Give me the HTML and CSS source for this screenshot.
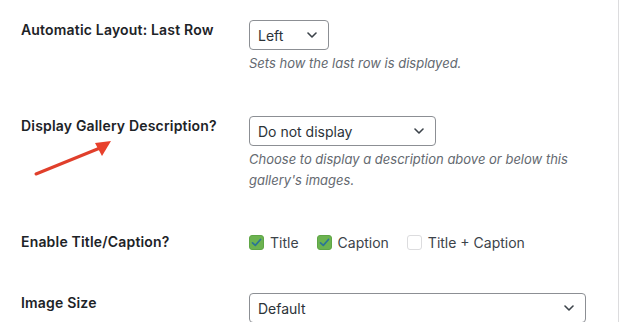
FILE: index.html
```html
<!DOCTYPE html>
<html lang="en">
<head>
  <meta charset="UTF-8">
  <title>Gallery Settings</title>
  <link rel="stylesheet" href="styles.css">
</head>
<body>
  <div class="panel">
    <!-- Settings rows -->
    <div class="form-table">
      <div class="row">
        <div class="label">Automatic Layout: Last Row</div>
        <div class="field">
          <div class="select select-small">
            <span>Left</span>
            <svg class="chevron" width="10" height="6" viewBox="0 0 10 6"><path d="M1 1l4 4 4-4" fill="none" stroke="#3c434a" stroke-width="1.6" stroke-linecap="round" stroke-linejoin="round"/></svg>
          </div>
          <p class="description">Sets how the last row is displayed.</p>
        </div>
      </div>

      <div class="row">
        <div class="label">Display Gallery Description?</div>
        <div class="field">
          <div class="select select-medium">
            <span>Do not display</span>
            <svg class="chevron" width="10" height="6" viewBox="0 0 10 6"><path d="M1 1l4 4 4-4" fill="none" stroke="#3c434a" stroke-width="1.6" stroke-linecap="round" stroke-linejoin="round"/></svg>
          </div>
          <p class="description">Choose to display a description above or below this gallery's images.</p>
        </div>
      </div>

      <div class="row row-checks">
        <div class="label">Enable Title/Caption?</div>
        <div class="field checks">
          <label class="check-item">
            <span class="check checked">
              <svg width="11" height="9" viewBox="0 0 11 9"><path d="M1.5 4.8l2.8 2.6L9.5 1.5" fill="none" stroke="#2b7596" stroke-width="1.7" stroke-linecap="round" stroke-linejoin="round"/></svg>
            </span>
            Title
          </label>
          <label class="check-item">
            <span class="check checked">
              <svg width="11" height="9" viewBox="0 0 11 9"><path d="M1.5 4.8l2.8 2.6L9.5 1.5" fill="none" stroke="#2b7596" stroke-width="1.7" stroke-linecap="round" stroke-linejoin="round"/></svg>
            </span>
            Caption
          </label>
          <label class="check-item">
            <span class="check"></span>
            Title + Caption
          </label>
        </div>
      </div>

      <div class="row">
        <div class="label">Image Size</div>
        <div class="field">
          <div class="select select-wide">
            <span>Default</span>
            <svg class="chevron" width="10" height="6" viewBox="0 0 10 6"><path d="M1 1l4 4 4-4" fill="none" stroke="#3c434a" stroke-width="1.6" stroke-linecap="round" stroke-linejoin="round"/></svg>
          </div>
        </div>
      </div>
    </div>

    <!-- Annotation arrow -->
    <svg class="arrow" width="120" height="60" viewBox="0 0 120 60">
      <line x1="36" y1="44" x2="100" y2="18" stroke="#e03f2b" stroke-width="3" stroke-linecap="round"/>
      <polygon points="95,13 111,11 102,26" fill="#e8412c"/>
    </svg>
  </div>
</body>
</html>
```

FILE: styles.css
```css
:root {
  --text: #1d2327;
  --muted: #646970;
  --border: #8c8f94;
  --green: #6cb350;
}

* {
  margin: 0;
  padding: 0;
  box-sizing: border-box;
}

body {
  font-family: Inter, "Noto Sans", sans-serif;
  background-color: white;
  color: var(--text);
  overflow: hidden;
}

.panel {
  position: relative;
  width: 619px;
  height: 322px;
  border-right: 1px solid #dcdcde;
  padding: 20px 0 0 21px;
}

.form-table {
  display: flex;
  flex-direction: column;
  gap: 42px;
}

.row {
  display: grid;
  grid-template-columns: 228px 1fr;
  align-items: start;
}

.label {
  font-size: 14px;
  font-weight: 600;
  line-height: 20px;
  letter-spacing: 0.18px;
}

.row-checks .label {
  line-height: 18px;
}

.select {
  display: flex;
  align-items: center;
  justify-content: space-between;
  height: 30px;
  padding: 0 11px 0 8px;
  border: 1px solid var(--border);
  border-radius: 4px;
  font-size: 14px;
  color: #2c3338;
  background-color: white;
}

.select-small {
  width: 80px;
}

.select-medium {
  width: 187px;
}

.select-wide {
  width: 337px;
}

.chevron {
  flex-shrink: 0;
}

.description {
  margin-top: 3px;
  font-size: 13px;
  font-style: italic;
  line-height: 21px;
  color: var(--muted);
  max-width: 340px;
}

.checks {
  display: flex;
  gap: 18px;
  height: 18px;
  align-items: center;
}

.check-item {
  display: flex;
  align-items: center;
  gap: 6px;
  font-size: 14px;
  color: #3c434a;
}

.check {
  display: flex;
  align-items: center;
  justify-content: center;
  width: 15px;
  height: 15px;
  border: 1px solid #dcdcde;
  border-radius: 3px;
  background-color: white;
}

.check.checked {
  background-color: var(--green);
  border-color: #5fa646;
}

.arrow {
  position: absolute;
  left: 0;
  top: 130px;
}
```
